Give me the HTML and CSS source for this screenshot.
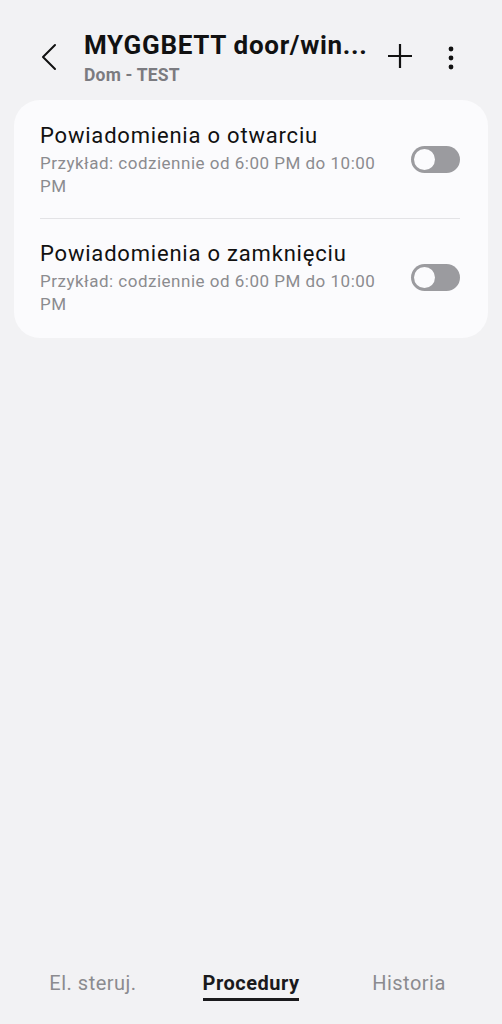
FILE: index.html
```html
<!DOCTYPE html>
<html lang="pl">
<head>
<meta charset="utf-8">
<link rel="stylesheet" href="styles.css">
</head>
<body>
<div class="screen">
  <header class="appbar">
    <button class="icon-btn back" aria-label="Wstecz">
      <svg width="16" height="28" viewBox="0 0 16 28"><path d="M14 2 L2 14 L14 26" fill="none" stroke="#111" stroke-width="2" stroke-linecap="round" stroke-linejoin="round"/></svg>
    </button>
    <div class="titles">
      <div class="title">MYGGBETT door/win...</div>
      <div class="subtitle">Dom - TEST</div>
    </div>
    <button class="icon-btn plus" aria-label="Dodaj">
      <svg width="26" height="26" viewBox="0 0 26 26"><path d="M13 1 V25 M1 13 H25" stroke="#111" stroke-width="2.2"/></svg>
    </button>
    <button class="icon-btn more" aria-label="Więcej">
      <svg width="6" height="24" viewBox="0 0 6 24"><circle cx="3" cy="3" r="2.4" fill="#111"/><circle cx="3" cy="12" r="2.4" fill="#111"/><circle cx="3" cy="21" r="2.4" fill="#111"/></svg>
    </button>
  </header>

  <section class="card">
    <div class="row">
      <div class="row-text">
        <div class="row-title">Powiadomienia o otwarciu</div>
        <div class="row-sub">Przykład: codziennie od 6:00 PM do 10:00 PM</div>
      </div>
      <div class="switch"><span class="knob"></span></div>
    </div>
    <div class="divider"></div>
    <div class="row">
      <div class="row-text">
        <div class="row-title">Powiadomienia o zamknięciu</div>
        <div class="row-sub">Przykład: codziennie od 6:00 PM do 10:00 PM</div>
      </div>
      <div class="switch"><span class="knob"></span></div>
    </div>
  </section>

  <div class="spacer"></div>

  <nav class="tabs">
    <div class="tab-cell"><span class="tab">El. steruj.</span></div>
    <div class="tab-cell"><span class="tab active">Procedury</span></div>
    <div class="tab-cell"><span class="tab">Historia</span></div>
  </nav>
</div>
</body>
</html>
```
FILE: styles.css
```css
* { box-sizing: border-box; }
html, body { margin: 0; padding: 0; }
body {
  background: #f2f2f4;
  font-family: Roboto, "Noto Sans", sans-serif;
  color: #111;
}
.screen {
  min-height: 1024px;
  display: flex;
  flex-direction: column;
}
.appbar {
  display: flex;
  align-items: flex-start;
  padding: 29px 0 0 0;
  height: 100px;
}
.icon-btn {
  background: none;
  border: 0;
  padding: 0;
  display: flex;
  align-items: center;
  justify-content: center;
}
.back { width: 16px; margin: 14px 0 0 41px; }
.titles { margin-left: 27px; flex: 1; min-width: 0; }
.title {
  font-size: 26px;
  font-weight: 700;
  line-height: 32px;
  white-space: nowrap;
  letter-spacing: 0.7px;
}
.subtitle {
  font-size: 17.5px;
  font-weight: 700;
  color: #7b7b80;
  line-height: 22px;
  margin-top: 3px;
  letter-spacing: 0.2px;
}
.plus { margin: 14px 0 0 0; }
.more { margin: 17px 48px 0 35px; }

.card {
  margin: 0 14px;
  background: #fbfbfd;
  border-radius: 26px;
  padding: 1px 28px 2px 26px;
}
.row {
  display: flex;
  align-items: center;
  gap: 24px;
  padding: 20px 0 20px;
}
.row-text { flex: 1; min-width: 0; }
.row-title {
  font-size: 22px;
  line-height: 30px;
  color: #111;
  letter-spacing: 0.8px;
}
.row-sub {
  font-size: 17px;
  line-height: 23px;
  color: #8b8b8f;
  margin-top: 1px;
  letter-spacing: 0.5px;
}
.switch {
  width: 49px;
  height: 27px;
  border-radius: 14px;
  background: #9b9b9f;
  position: relative;
  flex: none;
}
.knob {
  position: absolute;
  left: 3px;
  top: 3px;
  width: 21px;
  height: 21px;
  border-radius: 50%;
  background: #fbfbfd;
}
.divider {
  height: 1px;
  background: #e3e3e6;
}
.spacer { flex: 1; }
.tabs {
  display: grid;
  grid-template-columns: repeat(3, 1fr);
  padding: 0 14px 23px;
}
.tab-cell {
  display: flex;
  justify-content: center;
}
.tab {
  display: block;
  font-size: 20px;
  color: #8b8b8f;
  line-height: 23px;
  height: 29px;
  letter-spacing: 0.5px;
}
.active {
  color: #1a1a1c;
  font-weight: 700;
  border-bottom: 3px solid #1a1a1c;
}
```
